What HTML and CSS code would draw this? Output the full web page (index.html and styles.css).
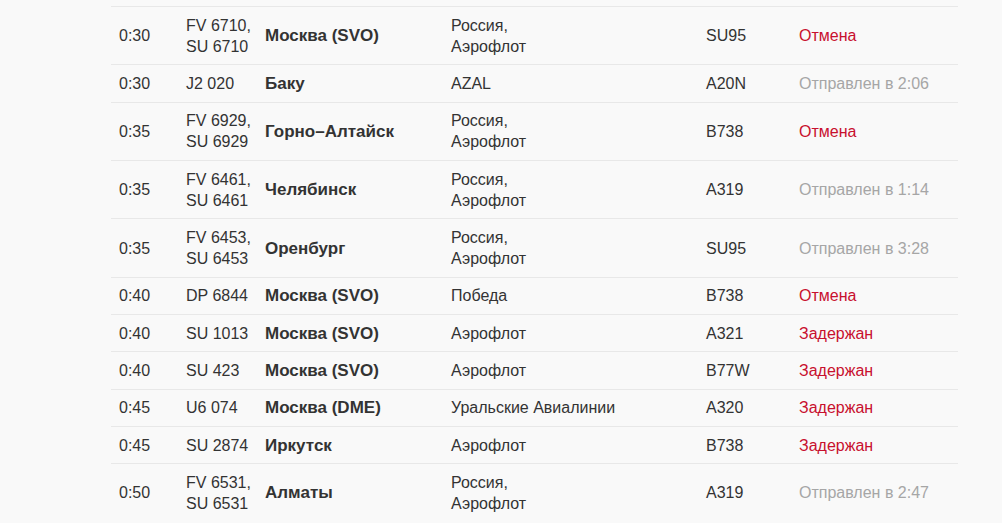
FILE: index.html
```html
<!DOCTYPE html>
<html lang="ru">
<head>
<meta charset="utf-8">
<link rel="stylesheet" href="styles.css">
</head>
<body>
<div class="board">
<table class="flights">
<colgroup>
<col class="c-time"><col class="c-flight"><col class="c-dest"><col class="c-airline"><col class="c-craft"><col class="c-status">
</colgroup>
<tbody>
<tr><td>0:30</td><td><span class="ln">FV 6710,</span><span class="ln">SU 6710</span></td><td class="dest">Москва (SVO)</td><td><span class="ln">Россия,</span><span class="ln">Аэрофлот</span></td><td>SU95</td><td class="st red">Отмена</td></tr>
<tr><td>0:30</td><td>J2 020</td><td class="dest">Баку</td><td>AZAL</td><td>A20N</td><td class="st gray">Отправлен в 2:06</td></tr>
<tr><td>0:35</td><td><span class="ln">FV 6929,</span><span class="ln">SU 6929</span></td><td class="dest">Горно–Алтайск</td><td><span class="ln">Россия,</span><span class="ln">Аэрофлот</span></td><td>B738</td><td class="st red">Отмена</td></tr>
<tr><td>0:35</td><td><span class="ln">FV 6461,</span><span class="ln">SU 6461</span></td><td class="dest">Челябинск</td><td><span class="ln">Россия,</span><span class="ln">Аэрофлот</span></td><td>A319</td><td class="st gray">Отправлен в 1:14</td></tr>
<tr><td>0:35</td><td><span class="ln">FV 6453,</span><span class="ln">SU 6453</span></td><td class="dest">Оренбург</td><td><span class="ln">Россия,</span><span class="ln">Аэрофлот</span></td><td>SU95</td><td class="st gray">Отправлен в 3:28</td></tr>
<tr><td>0:40</td><td>DP 6844</td><td class="dest">Москва (SVO)</td><td>Победа</td><td>B738</td><td class="st red">Отмена</td></tr>
<tr><td>0:40</td><td>SU 1013</td><td class="dest">Москва (SVO)</td><td>Аэрофлот</td><td>A321</td><td class="st red">Задержан</td></tr>
<tr><td>0:40</td><td>SU 423</td><td class="dest">Москва (SVO)</td><td>Аэрофлот</td><td>B77W</td><td class="st red">Задержан</td></tr>
<tr><td>0:45</td><td>U6 074</td><td class="dest">Москва (DME)</td><td>Уральские Авиалинии</td><td>A320</td><td class="st red">Задержан</td></tr>
<tr><td>0:45</td><td>SU 2874</td><td class="dest">Иркутск</td><td>Аэрофлот</td><td>B738</td><td class="st red">Задержан</td></tr>
<tr><td>0:50</td><td><span class="ln">FV 6531,</span><span class="ln">SU 6531</span></td><td class="dest">Алматы</td><td><span class="ln">Россия,</span><span class="ln">Аэрофлот</span></td><td>A319</td><td class="st gray">Отправлен в 2:47</td></tr>
</tbody>
</table>
</div>
</body>
</html>
```

FILE: styles.css
```css
html, body {
  margin: 0;
  padding: 0;
  background: #f9f9f9;
}
body {
  font-family: "Liberation Sans", Arial, sans-serif;
  font-size: 16px;
  color: #333;
}
.board {
  padding: 6px 44px 0 111px;
}
.flights {
  width: 847px;
  border-collapse: collapse;
  table-layout: fixed;
}
.c-time { width: 67px; }
.c-flight { width: 79px; }
.c-dest { width: 186px; }
.c-airline { width: 255px; }
.c-craft { width: 93px; }
.c-status { width: 167px; }
.flights td {
  border-top: 1px solid #e8e8e8;
  padding: 7.6px 8px;
  line-height: 21.1px;
  vertical-align: middle;
  white-space: nowrap;
}
.ln { display: block; }
.dest {
  font-weight: bold;
  font-size: 17px;
}
.red { color: #c8102e; }
.gray { color: #a6a6a6; }
```
